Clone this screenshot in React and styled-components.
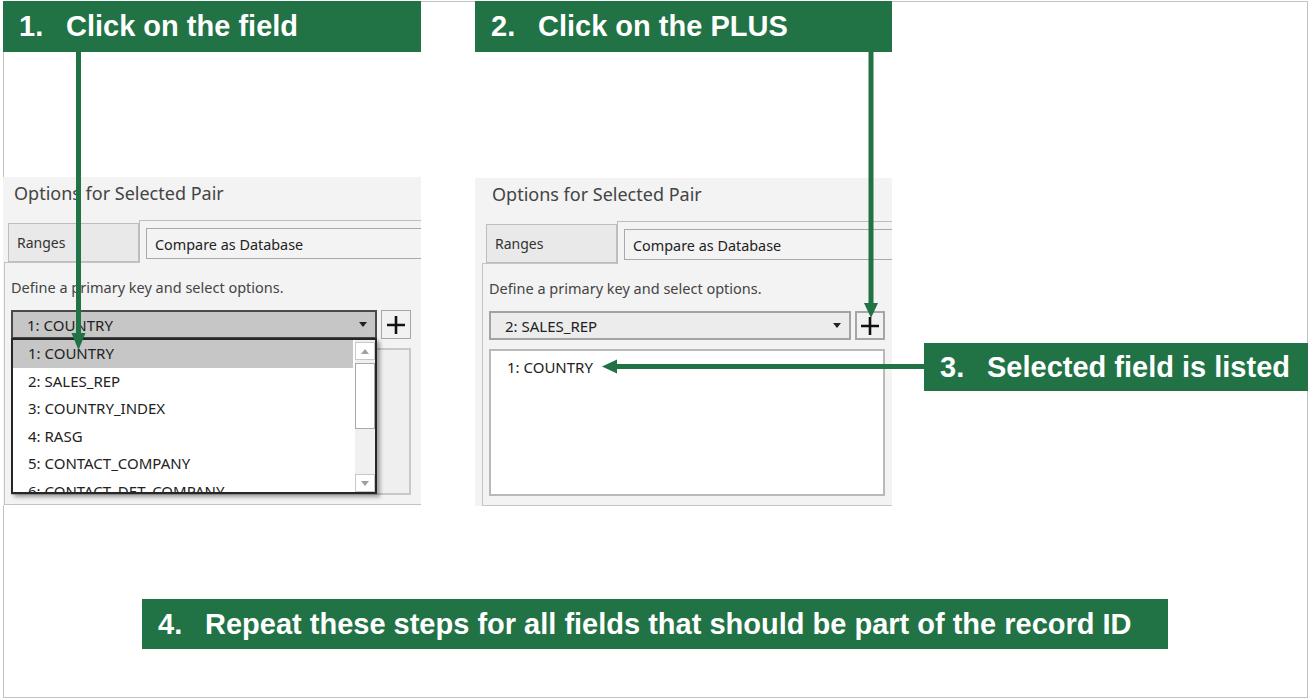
import React from "react";
import styled, { createGlobalStyle } from "styled-components";

const GREEN = "#217346";
const UI_FONT = `"Noto Sans", "Open Sans", sans-serif`;

const Global = createGlobalStyle`
  html, body { margin: 0; background: #fff; }
  body { font-family: "Liberation Sans", Arial, sans-serif; }
`;

const Frame = styled.div`
  position: relative;
  box-sizing: border-box;
  margin: 1px 0 0 3px;
  width: 1305px;
  height: 697px;
  box-shadow: inset 0 0 0 1px #c3c3c3;
  display: flex;
  flex-direction: column;
`;

const TopRow = styled.div`
  display: flex;
  align-items: flex-start;
`;

const Column = styled.div`
  width: ${(p) => p.$width}px;
  margin-left: ${(p) => p.$gap || 0}px;
  display: flex;
  flex-direction: column;
  flex: none;
`;

const Step = styled.div`
  box-sizing: border-box;
  width: ${(p) => p.$width}px;
  height: ${(p) => p.$height || 51}px;
  margin-top: ${(p) => p.$top || 0}px;
  margin-left: ${(p) => p.$left || 0}px;
  padding-left: 16px;
  background: ${GREEN};
  color: #fff;
  font: bold 29px/1 "Liberation Sans", Arial, sans-serif;
  display: flex;
  align-items: center;
  white-space: nowrap;
  flex: none;
`;

const StepNo = styled.span`
  width: 47px;
  flex: none;
`;

const Panel = styled.div`
  margin-top: ${(p) => p.$top}px;
  background: #f3f3f3;
  font-family: ${UI_FONT};
  color: #3a3a3a;
`;

const PanelTitle = styled.div`
  height: 43px;
  line-height: 32px;
  padding-left: ${(p) => 11 + p.$shift}px;
  font-size: 18px;
  color: #444;
`;

const TabRow = styled.div`
  display: flex;
  align-items: flex-end;
  height: 42px;
  margin-left: ${(p) => 1 + p.$shift}px;
  padding-left: 4px;
`;

const Tab = styled.div`
  box-sizing: border-box;
  width: 131px;
  height: 39px;
  padding-left: 8px;
  background: #e9e9e9;
  border: 1px solid #bdbdbd;
  font-size: 14px;
  line-height: 37px;
  color: #333;
`;

const ActiveTab = styled.div`
  position: relative;
  z-index: 1;
  box-sizing: border-box;
  flex: 1;
  height: 43px;
  margin-bottom: -1px;
  padding: 7px 0 4px 6px;
  background: #f3f3f3;
  border-top: 1px solid #bdbdbd;
  border-left: 1px solid #bdbdbd;
`;

const TabBox = styled.div`
  box-sizing: border-box;
  height: 31px;
  padding-left: 8px;
  border: 1px solid #a9a9a9;
  border-right: none;
  font-size: 14.4px;
  line-height: 31px;
  color: #222;
`;

const Content = styled.div`
  box-sizing: border-box;
  height: 243px;
  margin-left: ${(p) => 1 + p.$shift}px;
  padding: 0 ${(p) => p.$padRight}px 0 6px;
  border: 1px solid #c4c4c4;
  border-right: none;
`;

const Hint = styled.div`
  height: 47px;
  line-height: 48px;
  font-size: 14.5px;
  color: #444;
`;

const ControlRow = styled.div`
  display: flex;
  gap: 4px;
  height: 29px;
`;

const DropWrap = styled.div`
  position: relative;
  flex: 1;
`;

const Select = styled.div`
  box-sizing: border-box;
  height: 29px;
  display: flex;
  align-items: center;
  justify-content: space-between;
  padding: 0 8px 0 14px;
  border: 2px solid ${(p) => (p.$open ? "#4a4a4a" : "#a3a3a3")};
  background: ${(p) => (p.$open ? "#c6c6c6" : "#ececec")};
  font-size: 15px;
  color: #222;
`;

const PlusButton = styled.div`
  box-sizing: border-box;
  width: 30px;
  height: 29px;
  display: flex;
  align-items: center;
  justify-content: center;
  border: ${(p) => (p.$thick ? 2 : 1)}px solid #a6a6a6;
  background: #f2f2f2;
`;

const ListBox = styled.div`
  box-sizing: border-box;
  height: 147px;
  margin-top: 9px;
  padding-top: 3px;
  border: 2px solid ${(p) => (p.$muted ? "#c9c9c9" : "#b9b9b9")};
  background: ${(p) => (p.$muted ? "#efefef" : "#fff")};
`;

const ListItem = styled.div`
  padding-left: 16px;
  line-height: 27px;
  font-size: 15px;
  color: #222;
`;

const Popup = styled.div`
  position: absolute;
  z-index: 3;
  left: 0;
  right: 0;
  top: calc(100% - 1px);
  box-sizing: border-box;
  height: 156px;
  display: flex;
  border: 2px solid #262626;
  background: #fff;
  box-shadow: 3px 3px 4px rgba(0, 0, 0, 0.35);
  overflow: hidden;
`;

const Options = styled.div`
  flex: 1;
  margin-right: 2px;
`;

const Option = styled.div`
  height: 27.5px;
  line-height: 27.5px;
  padding-left: 15px;
  font-size: 15px;
  color: #222;
  white-space: nowrap;
  background: ${(p) => (p.$active ? "#c6c6c6" : "transparent")};
`;

const Scrollbar = styled.div`
  width: 20px;
  display: flex;
  flex-direction: column;
  background: #f0f0f0;
`;

const ScrollButton = styled.div`
  box-sizing: border-box;
  height: 18px;
  margin-top: ${(p) => (p.$down ? "auto" : "2px")};
  display: flex;
  align-items: center;
  justify-content: center;
  border: 1px solid #c8c8c8;
  background: #fff;
`;

const Thumb = styled.div`
  box-sizing: border-box;
  height: 66px;
  margin-top: 3px;
  border: 1px solid #a8a8a8;
  background: #fff;
`;

const Overlay = styled.svg`
  position: absolute;
  left: 0;
  top: 0;
  z-index: 5;
  pointer-events: none;
`;

const Caret = () => (
  <svg width="8" height="5" viewBox="0 0 8 5">
    <path d="M0 0h8L4 5z" fill="#222" />
  </svg>
);

const Plus = () => (
  <svg width="18" height="18" viewBox="0 0 18 18">
    <path d="M9 0v18M0 9h18" stroke="#111" strokeWidth="2.6" />
  </svg>
);

const Tri = ({ down }) => (
  <svg width="8" height="5" viewBox="0 0 8 5">
    <path d={down ? "M0 0h8L4 5z" : "M0 5h8L4 0z"} fill="#a0a0a0" />
  </svg>
);

const fields = [
  "1: COUNTRY",
  "2: SALES_REP",
  "3: COUNTRY_INDEX",
  "4: RASG",
  "5: CONTACT_COMPANY",
  "6: CONTACT_DET_COMPANY",
];

function OptionsPanel({ top, shift, padRight, open, value, listed }) {
  return (
    <Panel $top={top}>
      <PanelTitle $shift={shift}>Options for Selected Pair</PanelTitle>
      <TabRow $shift={shift}>
        <Tab>Ranges</Tab>
        <ActiveTab>
          <TabBox>Compare as Database</TabBox>
        </ActiveTab>
      </TabRow>
      <Content $shift={shift} $padRight={padRight}>
        <Hint>Define a primary key and select options.</Hint>
        <ControlRow>
          <DropWrap>
            <Select $open={open}>
              {value}
              <Caret />
            </Select>
            {open && (
              <Popup>
                <Options>
                  {fields.map((f, i) => (
                    <Option key={f} $active={i === 0}>
                      {f}
                    </Option>
                  ))}
                </Options>
                <Scrollbar>
                  <ScrollButton>
                    <Tri />
                  </ScrollButton>
                  <Thumb />
                  <ScrollButton $down>
                    <Tri down />
                  </ScrollButton>
                </Scrollbar>
              </Popup>
            )}
          </DropWrap>
          <PlusButton $thick={!open}>
            <Plus />
          </PlusButton>
        </ControlRow>
        <ListBox $muted={open}>
          {listed.map((f) => (
            <ListItem key={f}>{f}</ListItem>
          ))}
        </ListBox>
      </Content>
    </Panel>
  );
}

// arrows drawn in frame coordinates (page minus 3,1)
const arrows = [
  { line: "M75.5 51V333", head: "68.5,332 82.5,332 75.5,349" },
  { line: "M868 51V303", head: "861,302 875,302 868,317" },
  { line: "M921 365.5H613", head: "614,358.5 614,372.5 599,365.5" },
];

export default function App() {
  return (
    <>
      <Global />
      <Frame>
        <TopRow>
          <Column $width={418}>
            <Step $width={418}>
              <StepNo>1.</StepNo>Click on the field
            </Step>
            <OptionsPanel
              top={125}
              shift={0}
              padRight={10}
              open
              value="1: COUNTRY"
              listed={[]}
            />
          </Column>
          <Column $width={417} $gap={54}>
            <Step $width={417}>
              <StepNo>2.</StepNo>Click on the PLUS
            </Step>
            <OptionsPanel
              top={126}
              shift={6}
              padRight={7}
              value="2: SALES_REP"
              listed={["1: COUNTRY"]}
            />
          </Column>
          <Column $width={384} $gap={32}>
            <Step $width={384} $height={48} $top={342}>
              <StepNo>3.</StepNo>Selected field is listed
            </Step>
          </Column>
        </TopRow>
        <Step $width={1026} $height={50} $top={93} $left={139}>
          <StepNo>4.</StepNo>Repeat these steps for all fields that should be part of the record ID
        </Step>
        <Overlay width="1305" height="697">
          {arrows.map((a, i) => (
            <g key={i} fill={GREEN}>
              <path d={a.line} stroke={GREEN} strokeWidth="5" fill="none" />
              <polygon points={a.head} />
            </g>
          ))}
        </Overlay>
      </Frame>
    </>
  );
}
